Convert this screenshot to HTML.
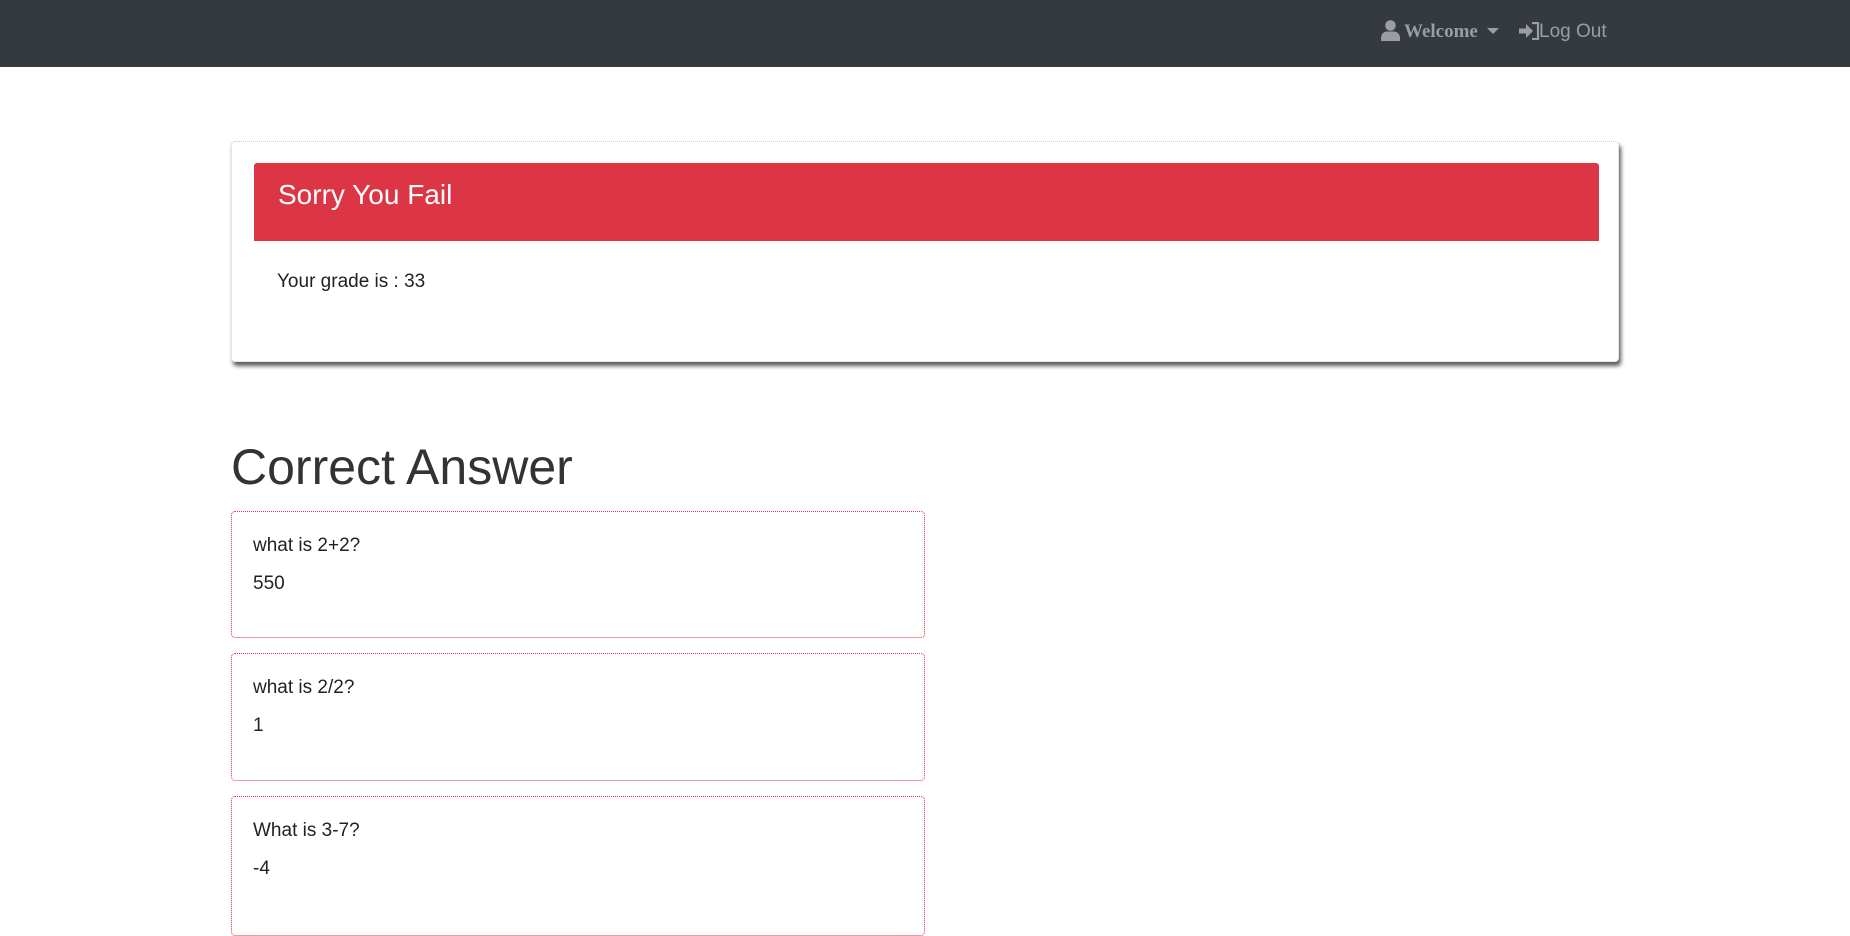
<!DOCTYPE html>
<html><head><meta charset="utf-8"><style>
*{box-sizing:border-box;margin:0;padding:0}
body{width:1850px;height:899px;overflow:hidden;background:#fff;font-family:"Liberation Sans",sans-serif;color:#333;position:relative}
.nav{position:absolute;left:0;top:0;width:1850px;height:67px;background:#343a40}
.nav .t{position:absolute;top:20px;color:#9a9da1;font-size:19px;line-height:24px}
.card{position:absolute;left:231px;top:141px;width:1388px;height:221px;border:1px dotted #ccc;border-radius:4px;background:#fff;box-shadow:2px 4px 4px rgba(0,0,0,.65)}
.hdr{position:absolute;left:22px;top:21px;width:1345px;height:78px;background:#dc3545;color:#fff;font-size:28px;line-height:30px;padding:17px 0 0 24px;border-radius:3px 3px 0 0}
.grade{position:absolute;left:277px;top:271px;font-size:19px;line-height:22px;color:#222}
h2{position:absolute;left:231px;top:437px;font-weight:400;font-size:50px;line-height:60px;color:#333}
.box{position:absolute;left:231px;width:694px;border:1px dotted #dc3545;border-radius:4px;background:#fff}
.box p{position:absolute;left:21px;font-size:19px;line-height:22px;color:#222}
</style></head><body>
<div class="nav">
  <svg style="position:absolute;left:1381px;top:20px" width="19" height="21" viewBox="0 0 19 21"><circle cx="9.5" cy="5.5" r="5.3" fill="#9a9da1"/><path d="M0 21v-3c0-4 3-6.5 6-6.5h7c3 0 6 2.5 6 6.5v3z" fill="#9a9da1"/></svg>
  <span class="t" style="left:1404px;font-family:'Liberation Serif',serif;font-weight:bold">Welcome</span>
  <svg style="position:absolute;left:1487px;top:28px" width="12" height="7" viewBox="0 0 12 7"><path d="M0 0h12L6 6z" fill="#9a9da1"/></svg>
  <svg style="position:absolute;left:1519px;top:22px" width="21" height="18" viewBox="0 0 21 18"><path d="M0 6.5h7V2l7 7-7 7v-4.5H0z" fill="#9a9da1"/><path d="M13 1h6v16h-6" fill="none" stroke="#9a9da1" stroke-width="2.2"/></svg>
  <span class="t" style="left:1539px">Log Out</span>
</div>
<div class="card"><div class="hdr">Sorry You Fail</div></div>
<div class="grade">Your grade is : 33</div>
<h2>Correct Answer</h2>
<div class="box" style="top:511px;height:127px"><p style="top:23px">what is 2+2?</p><p style="top:61px">550</p></div>
<div class="box" style="top:653px;height:128px"><p style="top:23px">what is 2/2?</p><p style="top:61px">1</p></div>
<div class="box" style="top:796px;height:140px"><p style="top:23px">What is 3-7?</p><p style="top:61px">-4</p></div>
</body></html>
